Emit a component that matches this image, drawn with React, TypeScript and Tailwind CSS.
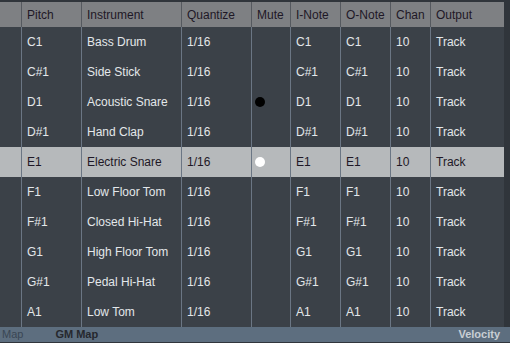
import React from "react";

const rows = [
  ["C1", "Bass Drum", ""],
  ["C#1", "Side Stick", ""],
  ["D1", "Acoustic Snare", "black"],
  ["D#1", "Hand Clap", ""],
  ["E1", "Electric Snare", "white"],
  ["F1", "Low Floor Tom", ""],
  ["F#1", "Closed Hi-Hat", ""],
  ["G1", "High Floor Tom", ""],
  ["G#1", "Pedal Hi-Hat", ""],
  ["A1", "Low Tom", ""],
];

const cols = "grid grid-cols-[22px_60px_100px_70px_39px_50px_50px_40px_73px]";

export default function App() {
  return (
    <div
      className="w-[510px] h-[343px] bg-[#30353b] flex flex-col overflow-hidden"
      style={{ fontFamily: '"Liberation Sans", Arial, sans-serif' }}
    >
      <div className="h-[2px] shrink-0" />
      <div className="flex flex-1 min-h-0">
        <div className="w-[504px] flex flex-col">
          <div className={`${cols} h-[25px] bg-[#55595f] text-[12px] text-[#1e1826]`}>
            {["", "Pitch", "Instrument", "Quantize", "Mute", "I-Note", "O-Note", "Chan", "Output"].map((h, i) => (
              <div
                key={i}
                className={`bg-[#7e8083] flex items-center pl-[5px] ${i < 8 ? "mr-[1px]" : ""}`}
              >
                {h}
              </div>
            ))}
          </div>
          {rows.map(([p, inst, dot], r) => {
            const sel = r === 4;
            return (
              <div
                key={r}
                className={`${cols} h-[30px] text-[12px] ${sel ? "bg-[#b6b9bb] text-[#1e1826]" : "bg-[#3b4148] text-[#e3e7ea]"}`}
              >
                {["", p, inst, "1/16", "", p, p, "10", "Track"].map((c, i) => (
                  <div
                    key={i}
                    className={`flex items-center pl-[5px] ${i < 8 ? "border-r border-[#6b7684]" : ""}`}
                  >
                    {i === 4 && dot ? (
                      <span
                        className={`block w-[10px] h-[10px] rounded-full ml-[-2px] ${dot === "black" ? "bg-black" : "bg-white"}`}
                      />
                    ) : (
                      c
                    )}
                  </div>
                ))}
              </div>
            );
          })}
        </div>
        <div className="flex-1 bg-[#30353b]" />
      </div>
      <div className="h-[15px] shrink-0 bg-[#5d6e7f] flex items-center text-[11px] px-[2px]">
        <span className="text-[#3a4654]">Map</span>
        <span className="ml-[32px] font-bold text-[#26282e]">GM Map</span>
        <span className="ml-auto mr-[8px] font-bold text-[#c9ced4]">Velocity</span>
      </div>
      <div className="h-[1px] shrink-0 bg-[#30353b]" />
    </div>
  );
}
